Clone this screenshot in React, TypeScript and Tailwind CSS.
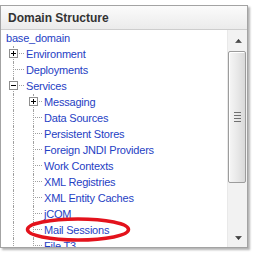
import React from "react";

type Node = { label: string; level: 0 | 1 | 2; box?: "+" | "-" };

const nodes: Node[] = [
  { label: "base_domain", level: 0 },
  { label: "Environment", level: 1, box: "+" },
  { label: "Deployments", level: 1 },
  { label: "Services", level: 1, box: "-" },
  { label: "Messaging", level: 2, box: "+" },
  { label: "Data Sources", level: 2 },
  { label: "Persistent Stores", level: 2 },
  { label: "Foreign JNDI Providers", level: 2 },
  { label: "Work Contexts", level: 2 },
  { label: "XML Registries", level: 2 },
  { label: "XML Entity Caches", level: 2 },
  { label: "jCOM", level: 2 },
  { label: "Mail Sessions", level: 2 },
  { label: "File T3", level: 2 },
];

function ExpandBox({ sign }: { sign: "+" | "-" }) {
  return (
    <svg
      className="absolute left-[8px] top-[3px] z-10"
      width="9"
      height="9"
      viewBox="0 0 9 9"
    >
      <rect x="0.5" y="0.5" width="8" height="8" fill="#fff" stroke="#8e8e8e" />
      <path d="M2 4.5h5" stroke="#000" />
      {sign === "+" && <path d="M4.5 2v5" stroke="#000" />}
    </svg>
  );
}

function PassCell() {
  return (
    <span className="relative block h-4 w-[20px] shrink-0">
      <span className="absolute bottom-0 left-[12px] top-0 border-l border-dotted border-[#a0a0a0]" />
    </span>
  );
}

function BranchCell({ width, box }: { width: string; box?: "+" | "-" }) {
  return (
    <span className={`relative block h-4 shrink-0 ${width}`}>
      <span className="absolute bottom-0 left-[12px] top-0 border-l border-dotted border-[#a0a0a0]" />
      <span className="absolute left-[12px] right-0 top-[7px] border-t border-dotted border-[#a0a0a0]" />
      {box && <ExpandBox sign={box} />}
    </span>
  );
}

function TreeRow({ node }: { node: Node }) {
  if (node.level === 0) {
    return (
      <div className="flex h-4 items-center pl-[5px]">
        <span className="text-[#1f41c4]">{node.label}</span>
      </div>
    );
  }
  return (
    <div className="flex h-4 items-center">
      {node.level === 2 && <PassCell />}
      <BranchCell width={node.level === 1 ? "w-[23px]" : "w-[21px]"} box={node.box} />
      <span className="ml-[2px] whitespace-nowrap text-[#1f41c4]">{node.label}</span>
    </div>
  );
}

function Arrow({ up }: { up?: boolean }) {
  return (
    <svg width="7" height="4" viewBox="0 0 7 4">
      <defs>
        <linearGradient id={up ? "au" : "ad"} x1="0" y1="0" x2="0" y2="1">
          <stop offset="0" stopColor={up ? "#202020" : "#606060"} />
          <stop offset="1" stopColor={up ? "#6a6a6a" : "#1c1c1c"} />
        </linearGradient>
      </defs>
      <polygon
        points={up ? "3.5,0 7,4 0,4" : "0,0 7,0 3.5,4"}
        fill={`url(#${up ? "au" : "ad"})`}
      />
    </svg>
  );
}

function Scrollbar() {
  return (
    <div className="flex w-[20px] shrink-0 flex-col border-l border-[#e9e9e9] bg-[#f2f2f2]">
      <div className="flex h-[21px] items-center justify-center pl-[1px] pt-[1px]">
        <Arrow up />
      </div>
      <div className="mr-[1px] flex h-[132px] flex-col items-center justify-center gap-[2px] rounded-[2px] border border-[#9c9c9c] bg-gradient-to-r from-[#f6f6f6] via-[#e9e9e9] to-[#d9d9d9] shadow-[inset_1px_1px_0_#fff]">
        <span className="block h-px w-[7px] bg-[#707070]" />
        <span className="block h-px w-[7px] bg-[#707070]" />
        <span className="block h-px w-[7px] bg-[#707070]" />
        <span className="block h-px w-[7px] bg-[#707070]" />
      </div>
      <div className="flex-1" />
      <div className="flex h-[18px] items-center justify-center pl-[1px]">
        <Arrow />
      </div>
    </div>
  );
}

export default function App() {
  return (
    <div className="relative h-[255px] w-[254px] overflow-hidden bg-white pt-[5px] font-['Liberation_Sans',Arial,sans-serif]">
      <div className="flex h-[243px] w-[248px] flex-col border border-[#a3a3a3] bg-white shadow-[2px_2px_2px_rgba(0,0,0,0.3)]">
        <div className="flex h-[24px] shrink-0 items-center border-b border-[#cdcdcd] bg-gradient-to-b from-[#fbfbfb] to-[#ebebeb] pl-[7px] text-[12px] font-bold text-[#333]">
          Domain Structure
        </div>
        <div className="flex min-h-0 flex-1">
          <div className="min-w-0 flex-1 overflow-hidden text-[11px] leading-4 tracking-[-0.2px]">
            {nodes.map((n) => (
              <TreeRow key={n.label} node={n} />
            ))}
          </div>
          <Scrollbar />
        </div>
      </div>
      <svg
        className="absolute left-[25px] top-[216px]"
        width="106"
        height="27"
        viewBox="0 0 106 27"
      >
        <ellipse cx="53" cy="13.5" rx="50.5" ry="10.5" fill="none" stroke="#e3121c" strokeWidth="3.5" />
      </svg>
    </div>
  );
}
